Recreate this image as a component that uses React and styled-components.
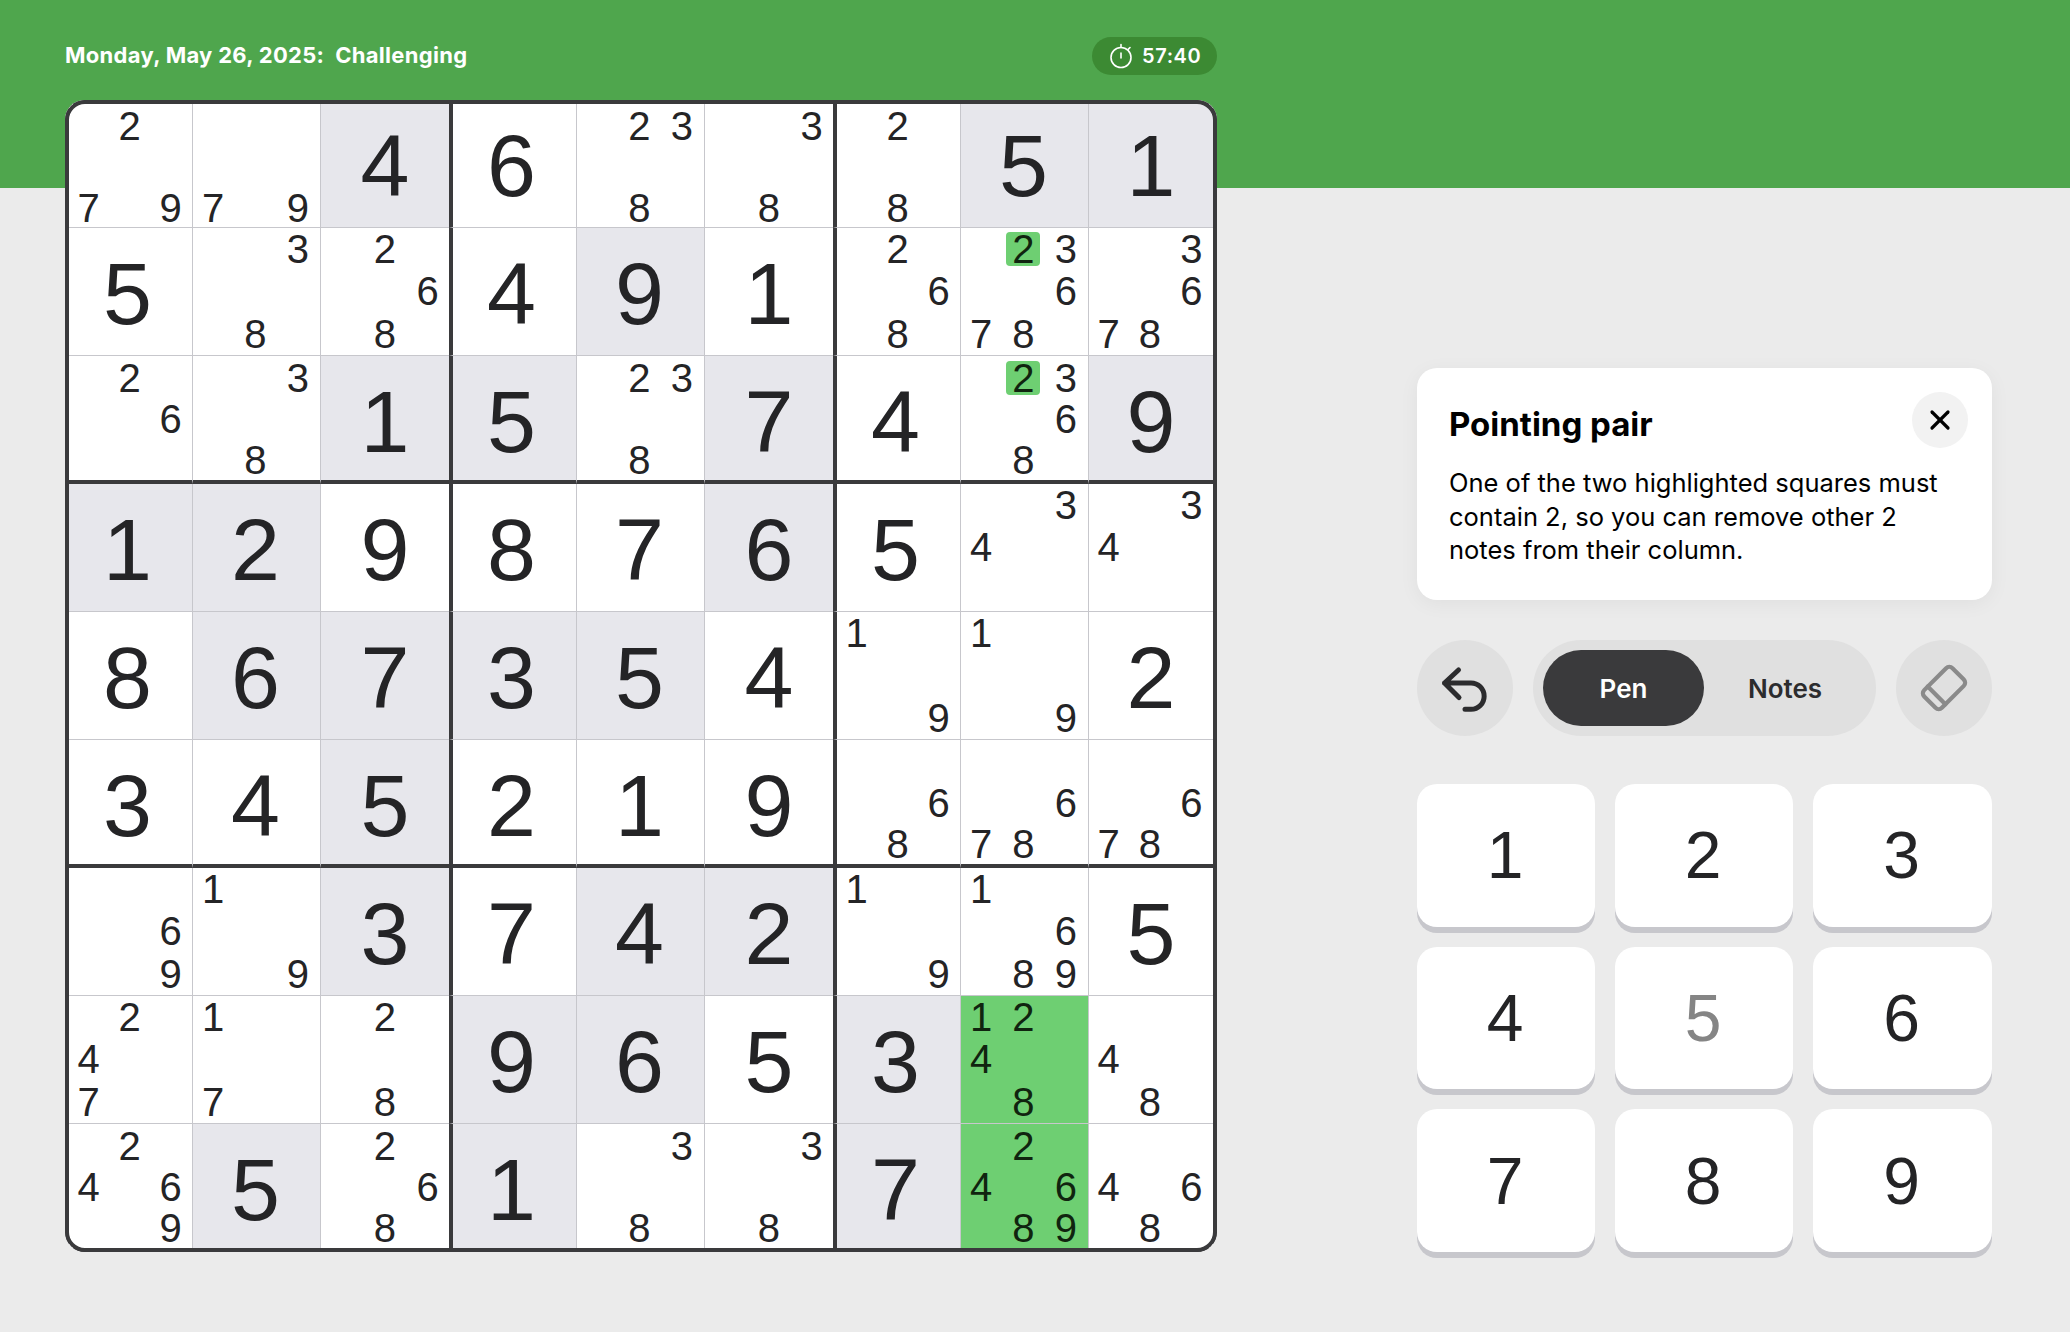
import React from "react";
import styled, { createGlobalStyle } from "styled-components";
import { X } from "lucide-react";

const GlobalStyle = createGlobalStyle`
    html, body {
        margin: 0;
        padding: 0;
        background: #ebebeb;
    }
    * {
        box-sizing: border-box;
    }
`;

const Page = styled.div`
    width: 2070px;
    height: 1332px;
    overflow: hidden;
    font-family: Inter, "Liberation Sans", sans-serif;
`;

const Header = styled.header`
    height: 188px;
    background: #4fa64d;
    padding: 37px 0 0 65px;
`;

const HeaderBar = styled.div`
    width: 1152px;
    height: 38px;
    display: flex;
    align-items: center;
    justify-content: space-between;
`;

const DateLine = styled.div`
    display: flex;
    gap: 11px;
    margin-top: -2px;
    color: #fff;
    font-size: 22px;
    font-weight: 700;
    letter-spacing: 0.3px;
`;

const TimerPill = styled.div`
    width: 125px;
    height: 38px;
    border-radius: 19px;
    background: #3c8a33;
    color: #fff;
    display: flex;
    align-items: center;
    gap: 9px;
    padding-left: 17px;
    font-size: 20px;
    font-weight: 600;
    letter-spacing: 0.6px;
`;

const Main = styled.main`
    margin-top: -88px;
    padding-left: 65px;
    display: flex;
    gap: 200px;
`;

const Board = styled.div`
    width: 1152px;
    height: 1152px;
    display: grid;
    grid-template-columns: repeat(9, 128px);
    grid-template-rows: repeat(9, 128px);
    border-radius: 20px;
    overflow: hidden;
    position: relative;
    background: #fff;

    &::after {
        content: '';
        position: absolute;
        inset: 0;
        border: 4px solid #3a3a3c;
        border-radius: 20px;
        pointer-events: none;
    }
`;

const Cell = styled.div`
    position: relative;
    display: flex;
    align-items: center;
    justify-content: center;
    background: ${(p) => (p.$tone === "green" ? "#6ecf72" : p.$tone === "shade" ? "#e7e7ec" : "#fff")};
    border-right: ${(p) => (p.$col === 8 ? "4px solid #3a3a3c" : (p.$col + 1) % 3 === 0 ? "none" : "1px solid #c7c7cc")};
    border-left: ${(p) => (p.$col % 3 === 0 ? "4px solid #3a3a3c" : "none")};
    border-bottom: ${(p) => ((p.$row + 1) % 3 === 0 ? "4px solid #3a3a3c" : "1px solid #c7c7cc")};
    border-top: ${(p) => (p.$row === 0 ? "4px solid #3a3a3c" : "none")};
    color: #242426;
`;

const BigDigit = styled.span`
    font-family: "Liberation Sans", Arial, sans-serif;
    font-size: 88px;
    line-height: 1;
    padding-top: 4px;
    transform: translate(
        ${(p) => (p.$col % 3 === 0 ? -3 : p.$col % 3 === 1 ? -1 : 0)}px,
        ${(p) => (p.$row === 0 ? -2 : p.$row % 3 === 2 ? 2 : 0)}px
    );
`;

const NotesGrid = styled.div`
    width: 100%;
    height: 100%;
    display: grid;
    grid-template-columns: repeat(3, 1fr);
    grid-template-rows: repeat(3, 1fr);
    justify-items: center;
    align-items: center;
    transform: translate(
        ${(p) => (p.$col === 2 || p.$col === 5 ? 0 : -1)}px,
        ${(p) => (p.$row === 0 || p.$row % 3 === 2 ? 1 : 0)}px
    );
`;

const Note = styled.span`
    width: 34px;
    height: 34px;
    border-radius: 4px;
    display: flex;
    align-items: center;
    justify-content: center;
    font-family: "Liberation Sans", Arial, sans-serif;
    font-size: 40px;
    line-height: 1;
    background: ${(p) => (p.$hl ? "#6ecf72" : "transparent")};
    color: ${(p) => (p.$hl || p.$onGreen ? "#10240f" : "#242426")};
`;

const Panel = styled.aside`
    width: 575px;
    height: 1152px;
    display: flex;
    flex-direction: column;
    justify-content: flex-end;
`;

const HintCard = styled.section`
    position: relative;
    height: 232px;
    background: #fff;
    border-radius: 20px;
    padding: 36px 32px 0;
    margin-bottom: 40px;
    box-shadow: 0 4px 20px rgba(0, 0, 0, 0.05);
    color: #000;
`;

const HintTitle = styled.h2`
    margin: 0 0 22px;
    font-size: 33px;
    line-height: 40px;
    font-weight: 700;
`;

const HintBody = styled.p`
    margin: 0;
    font-size: 25.5px;
    line-height: 33.5px;
    font-weight: 400;
`;

const CloseButton = styled.button`
    position: absolute;
    top: 24px;
    right: 24px;
    width: 56px;
    height: 56px;
    border: 0;
    padding: 0;
    border-radius: 50%;
    background: #f2f2f2;
    color: #000;
    display: flex;
    align-items: center;
    justify-content: center;
`;

const Controls = styled.div`
    height: 96px;
    margin-bottom: 48px;
    display: flex;
    justify-content: space-between;
`;

const RoundButton = styled.button`
    width: 96px;
    height: 96px;
    border: 0;
    padding: 0;
    border-radius: 50%;
    background: #e0e0e0;
    display: flex;
    align-items: center;
    justify-content: center;
`;

const ModeToggle = styled.div`
    width: 343px;
    height: 96px;
    border-radius: 48px;
    background: #e0e0e0;
    padding: 10px;
    display: grid;
    grid-template-columns: 161px 1fr;
`;

const ModeOption = styled.div`
    border-radius: 38px;
    display: flex;
    align-items: center;
    justify-content: center;
    font-size: 26px;
    font-weight: 600;
    background: ${(p) => (p.$active ? "#3a3a3c" : "transparent")};
    color: ${(p) => (p.$active ? "#fff" : "#2c2c2e")};
`;

const NumberPad = styled.div`
    display: grid;
    grid-template-columns: 178px 178px 179px;
    grid-template-rows: repeat(3, 1fr);
    gap: 20px;
    height: 468px;
`;

const NumberKey = styled.button`
    border: 0;
    padding: 0 2px 0 0;
    border-radius: 20px;
    background: #fff;
    box-shadow: 0 6px 0 #c7c7cc;
    font-family: "Liberation Sans", Arial, sans-serif;
    font-size: 66px;
    color: ${(p) => (p.$done ? "#858585" : "#242426")};
`;

const TimerIcon = () => (
    <svg width="24" height="26" viewBox="0 0 24 26" fill="none" stroke="#fff" strokeWidth="1.6" strokeLinecap="round">
        <circle cx="12" cy="14.5" r="10" />
        <path d="M12 1.5v3M21 4.5l-1.6 1.6M12 10v5" />
    </svg>
);

const UndoIcon = () => (
    <svg width="50" height="50" viewBox="0 0 50 50" fill="none" stroke="#2c2c2e" strokeWidth="5" strokeLinecap="round" strokeLinejoin="round">
        <path d="M18.5 7 4.5 20 19 34.5M4.5 20H31a13 13 0 0 1 0 26.3h-6" />
    </svg>
);

const EraserIcon = () => (
    <svg width="60" height="60" viewBox="0 0 60 60" fill="none" stroke="#8a8a8a" strokeWidth="4.2" strokeLinejoin="round" strokeLinecap="round">
        <g transform="rotate(-45 30 30)">
            <rect x="10" y="17.5" width="40" height="25" rx="4.5" />
            <path d="M19.5 17.5v25" />
        </g>
    </svg>
);

// [n] = shaded given, plain number = white given, string = pencil notes
const BOARD = [
    ["279", "79", [4], 6, "238", "38", "28", [5], [1]],
    [5, "38", "268", 4, [9], 1, "268", "23678", "3678"],
    ["26", "38", [1], [5], "238", [7], 4, "2368", [9]],
    [[1], [2], 9, 8, 7, [6], 5, "34", "34"],
    [8, [6], [7], [3], [5], 4, "19", "19", 2],
    [3, 4, [5], 2, 1, 9, "68", "678", "678"],
    ["69", "19", [3], 7, [4], [2], "19", "1689", 5],
    ["247", "17", "28", [9], [6], 5, [3], "1248", "48"],
    ["2469", [5], "268", [1], "38", "38", [7], "24689", "468"],
];

const HIGHLIGHTED_NOTES = ["1-7", "2-7"];
const GREEN_CELLS = ["7-7", "8-7"];
const DIGITS = [1, 2, 3, 4, 5, 6, 7, 8, 9];

const SudokuCell = ({ value, row, col }) => {
    const key = `${row}-${col}`;
    const green = GREEN_CELLS.includes(key);
    const shaded = Array.isArray(value);
    const tone = green ? "green" : shaded ? "shade" : "white";

    return (
        <Cell $row={row} $col={col} $tone={tone}>
            {typeof value === "string" ? (
                <NotesGrid $row={row} $col={col}>
                    {DIGITS.map((d) => (
                        <Note
                            key={d}
                            $onGreen={green}
                            $hl={d === 2 && HIGHLIGHTED_NOTES.includes(key)}
                        >
                            {value.includes(String(d)) ? d : ""}
                        </Note>
                    ))}
                </NotesGrid>
            ) : (
                <BigDigit $row={row} $col={col}>{shaded ? value[0] : value}</BigDigit>
            )}
        </Cell>
    );
};

const App = () => {
    return (
        <>
            <GlobalStyle />
            <Page>
                <Header>
                    <HeaderBar>
                        <DateLine>
                            <span>Monday, May 26, 2025:</span>
                            <span>Challenging</span>
                        </DateLine>
                        <TimerPill>
                            <TimerIcon />
                            57:40
                        </TimerPill>
                    </HeaderBar>
                </Header>

                <Main>
                    <Board>
                        {BOARD.map((cells, row) =>
                            cells.map((value, col) => (
                                <SudokuCell key={`${row}-${col}`} value={value} row={row} col={col} />
                            ))
                        )}
                    </Board>

                    <Panel>
                        <HintCard>
                            <HintTitle>Pointing pair</HintTitle>
                            <HintBody>
                                One of the two highlighted squares must contain 2, so you can remove other 2 notes from their column.
                            </HintBody>
                            <CloseButton>
                                <X size={32} strokeWidth={2.4} />
                            </CloseButton>
                        </HintCard>

                        <Controls>
                            <RoundButton>
                                <UndoIcon />
                            </RoundButton>
                            <ModeToggle>
                                <ModeOption $active>Pen</ModeOption>
                                <ModeOption>Notes</ModeOption>
                            </ModeToggle>
                            <RoundButton>
                                <EraserIcon />
                            </RoundButton>
                        </Controls>

                        <NumberPad>
                            {DIGITS.map((d) => (
                                <NumberKey key={d} $done={d === 5}>{d}</NumberKey>
                            ))}
                        </NumberPad>
                    </Panel>
                </Main>
            </Page>
        </>
    );
};

export default App;
